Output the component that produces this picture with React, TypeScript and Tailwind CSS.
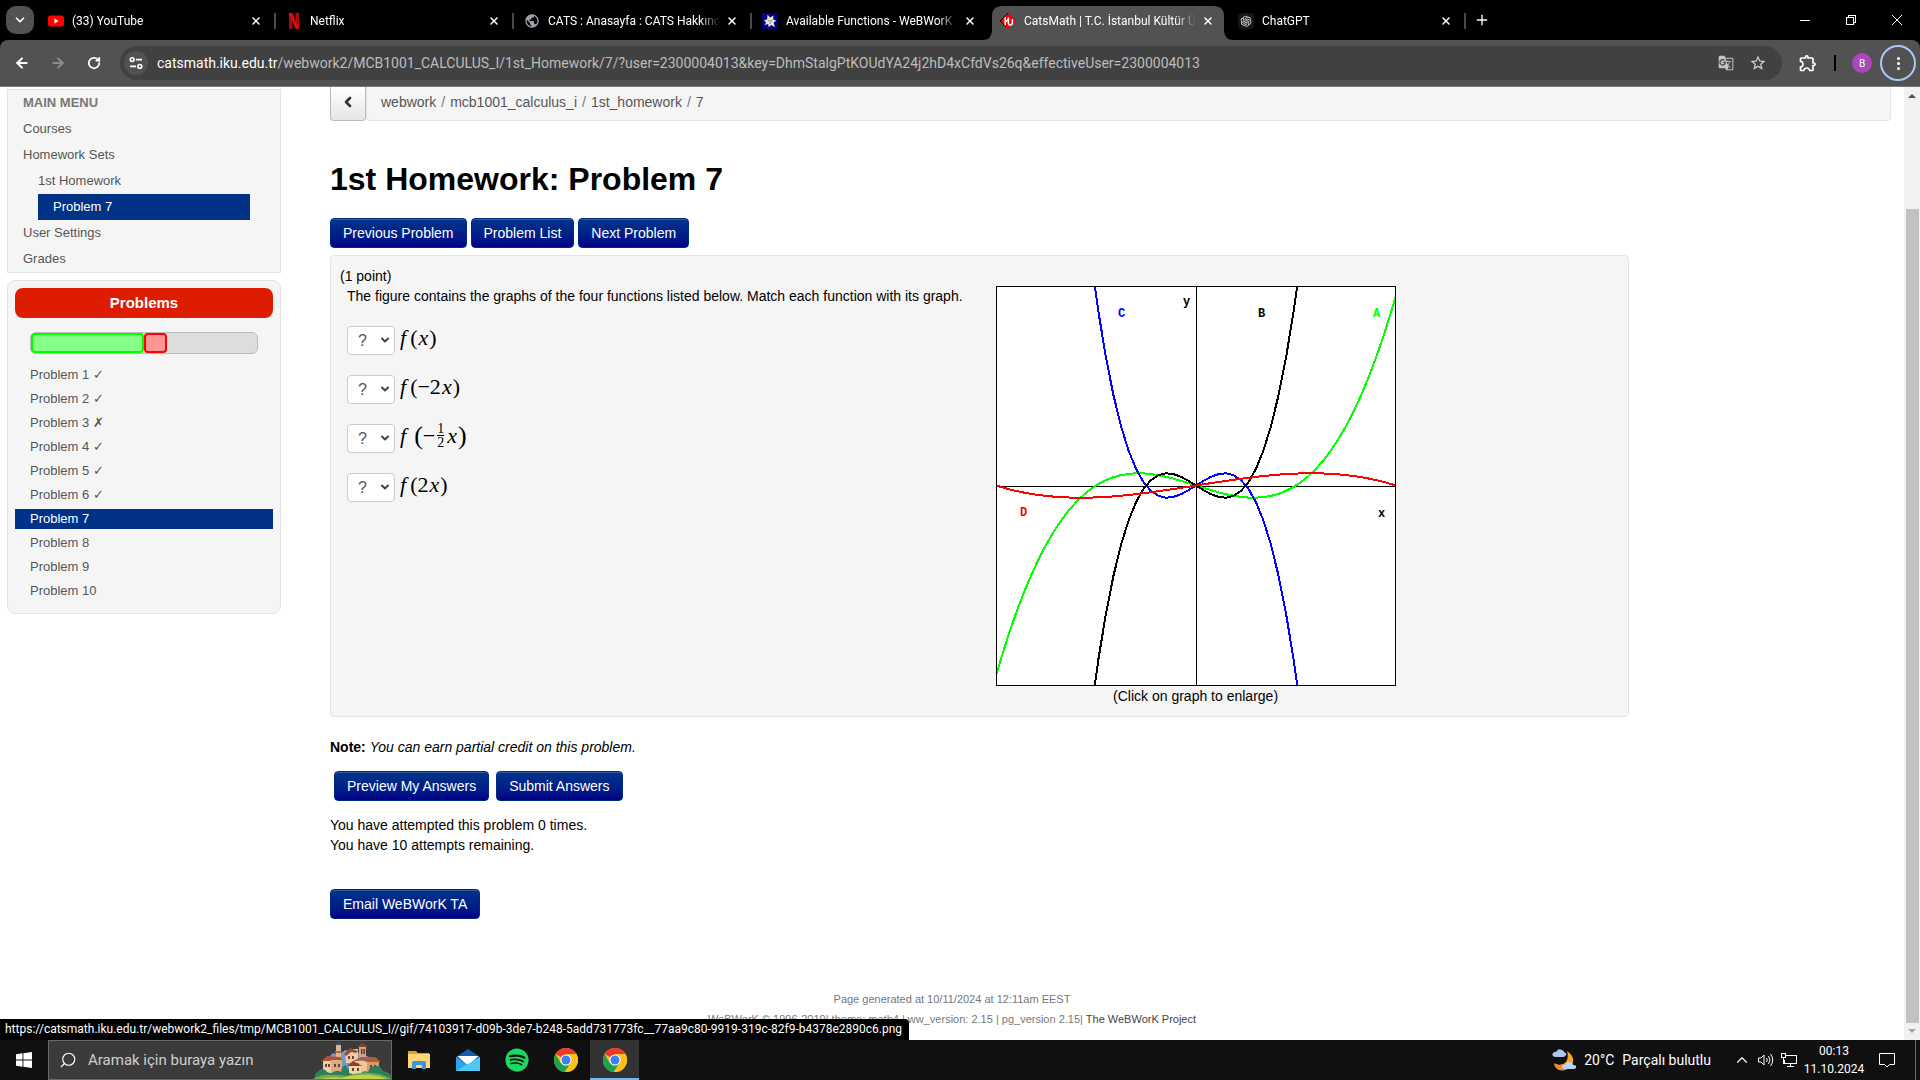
import React, { useState } from "react";
import { ArrowLeft, ArrowRight, ChevronDown, ChevronLeft, ChevronUp, Plus, RotateCw, Search, X } from "lucide-react";
import { FaSpotify } from "react-icons/fa";
import { AiOutlineOpenAI } from "react-icons/ai";
import { MdGTranslate, MdOutlineExtension, MdPublic, MdStarBorder } from "react-icons/md";

/* ---------- favicons ---------- */

function YoutubeIcon() {
  return (
    <svg viewBox="0 0 16 16" className="w-4 h-4 shrink-0">
      <rect x="0" y="2.5" width="16" height="11" rx="2.6" fill="#ff0000" />
      <path d="M6.4 5.6v4.8L10.6 8z" fill="#fff" />
    </svg>
  );
}

function NetflixIcon() {
  return (
    <svg viewBox="0 0 16 16" className="w-4 h-4 shrink-0">
      <path d="M3 0h3.3v16L3 16zM9.700 0H13v16l-3.300 0z" fill="#b1060f" />
      <path d="M3 0h3.3L13 16H9.700z" fill="#e50914" />
    </svg>
  );
}

function WebworkIcon() {
  return (
    <svg viewBox="0 0 16 16" className="w-4 h-4 shrink-0">
      <rect width="16" height="16" fill="#000080" />
      <path
        d="M5.5 1.500l2.600 2.900L11.500 2.500l-.4 3.700 3.100 1.500-2.600 1.800 1.400 4.700-3.600-2.100L6.500 14l-.3-2.900-3.800.8 1.800-2.500L2 7l3.200-.6z"
        fill="#ece6cf"
      />
      <path d="M6 7l2 1.500L10.400 7M7.400 10.400l1.800-.4" stroke="#6b6b86" strokeWidth="0.8" fill="none" />
    </svg>
  );
}

function CatsIcon() {
  return (
    <svg viewBox="0 0 16 16" className="w-4 h-4 shrink-0">
      <path d="M8 0l8 8-8 8-8-8z" fill="#f00000" />
      <path d="M8 0L0 8l6 6" stroke="#220000" strokeWidth="1" fill="none" />
      <path d="M5.200 4.200v8M5.400 9.200L9 5.600M8.400 4.600v5.600c0 2.400 4 2.400 4-.4V6" stroke="#fff" strokeWidth="1.5" fill="none" />
    </svg>
  );
}

function ChatIcon() {
  return (
    <span className="flex w-4 h-4 shrink-0 items-center justify-center rounded bg-[#171717]">
      <AiOutlineOpenAI className="w-3.5 h-3.5 text-zinc-300" />
    </span>
  );
}

function ChromeIcon() {
  return (
    <svg viewBox="0 0 24 24" className="w-6 h-6">
      <circle cx="12" cy="12" r="12" fill="#fbc116" />
      <path d="M12 12L1.6 6A12 12 0 0 1 22.4 6z" fill="#ea3c2d" />
      <path d="M22.4 6H12l-4 8z" fill="#ea3c2d" />
      <path d="M1.6 6l5.3 9.2 5.1 3L10.6 24A12 12 0 0 1 1.6 6z" fill="#1da251" />
      <path d="M10.6 24l6.2-9.5L12 12l-4.8 3.2 4.4 2.4z" fill="#1da251" />
      <path d="M22.4 6H12v6l5 2.8L11.4 24A12 12 0 0 0 22.4 6z" fill="#fbc116" />
      <circle cx="12" cy="12" r="5.6" fill="#fff" />
      <circle cx="12" cy="12" r="4.5" fill="#3b82f0" />
    </svg>
  );
}

/* ---------- browser chrome ---------- */

const TABS = [
  { title: "(33) YouTube", icon: <YoutubeIcon />, divider: true },
  { title: "Netflix", icon: <NetflixIcon />, divider: true },
  { title: "CATS : Anasayfa : CATS Hakkında", icon: <MdPublic className="w-4 h-4 shrink-0 text-[#9aa0a6]" />, divider: true },
  { title: "Available Functions - WeBWorK", icon: <WebworkIcon />, divider: false },
  { title: "CatsMath | T.C. İstanbul Kültür Üniversitesi", icon: <CatsIcon />, divider: false, active: true },
  { title: "ChatGPT", icon: <ChatIcon />, divider: true },
];

function TabStrip() {
  return (
    <div className="flex h-10 bg-black text-white">
      <div className="flex w-[38px] items-center pl-1.5">
        <button aria-label="Search tabs" className="flex h-7 w-7 items-center justify-center rounded-[10px] bg-[#525252]">
          <ChevronDown className="h-3.5 w-3.5" strokeWidth={3} />
        </button>
      </div>
      {TABS.map((tab) => (
        <div key={tab.title} className="relative flex w-[238px] min-w-0 pt-1.5">
          {tab.active && (
            <svg viewBox="0 0 252 34" className="absolute top-1.5 -left-2 h-[34px] w-[252px]">
              <path d="M0 34Q10 34 10 24V10Q10 0 20 0H232Q242 0 242 10V24Q242 34 252 34Z" fill="#525252" />
            </svg>
          )}
          <div className="relative flex flex-1 min-w-0 items-center pb-1 pl-2.5">
            {tab.icon}
            <span className="ml-2 flex-1 overflow-hidden text-xs leading-4 whitespace-nowrap [mask-image:linear-gradient(to_right,#000_88%,transparent)]">
              {tab.title}
            </span>
            <button aria-label={`Close ${tab.title}`} className="mr-2.5 ml-1 flex h-4 w-4 items-center justify-center">
              <X className="h-3 w-3" strokeWidth={3} />
            </button>
            <span className={`h-4 w-0.5 ${tab.divider ? "bg-[#4a4a4a]" : "bg-transparent"}`} />
          </div>
        </div>
      ))}
      <button aria-label="New tab" className="flex w-8 items-center justify-center">
        <Plus className="h-4 w-4" strokeWidth={2} />
      </button>
      <div className="ml-auto flex">
        <button aria-label="Minimize" className="flex w-[46px] items-center justify-center">
          <span className="h-px w-2.5 bg-white" />
        </button>
        <button aria-label="Restore" className="flex w-[46px] items-center justify-center">
          <svg viewBox="0 0 10 10" className="h-2.5 w-2.5" fill="none" stroke="#fff" shapeRendering="crispEdges">
            <path d="M.5 2.5h7v7h-7zM2.5 2.5v-2h7v7h-2" />
          </svg>
        </button>
        <button aria-label="Close" className="flex w-[46px] items-center justify-center">
          <svg viewBox="0 0 10 10" className="h-2.5 w-2.5" stroke="#fff">
            <path d="M0 0l10 10M10 0L0 10" />
          </svg>
        </button>
      </div>
    </div>
  );
}

function Toolbar() {
  return (
    <div className="bg-black">
      <div className="flex h-[47px] items-center rounded-t-lg border-b border-[#7a7a7a] bg-[#525252] px-1 text-white">
        <button aria-label="Back" className="flex h-8 w-9 items-center justify-center">
          <ArrowLeft className="h-4 w-4" strokeWidth={3} />
        </button>
        <button aria-label="Forward" className="flex h-8 w-9 items-center justify-center text-[#8c8c8c]">
          <ArrowRight className="h-4 w-4" strokeWidth={3} />
        </button>
        <button aria-label="Reload" className="flex h-8 w-9 items-center justify-center">
          <RotateCw className="h-3.5 w-3.5" strokeWidth={3} />
        </button>
        <div className="ml-2 flex h-[34px] flex-1 min-w-0 items-center rounded-full bg-[#414141] pr-2 pl-1">
          <span className="flex h-6 w-6 items-center justify-center rounded-full bg-[#525252]">
            <svg viewBox="0 0 14 14" className="h-3.5 w-3.5" fill="none" stroke="#fff" strokeWidth="1.6">
              <circle cx="3.2" cy="3.6" r="1.9" />
              <path d="M7 3.6h6M1 10.4h6" />
              <circle cx="10.8" cy="10.4" r="1.9" />
            </svg>
          </span>
          <span className="ml-[9px] flex-1 overflow-hidden text-sm leading-5 whitespace-nowrap text-[#bdbdbd]">
            <span className="text-white">catsmath.iku.edu.tr</span>
            /webwork2/MCB1001_CALCULUS_I/1st_Homework/7/?user=2300004013&amp;key=DhmStalgPtKOUdYA24j2hD4xCfdVs26q&amp;effectiveUser=2300004013
          </span>
          <button aria-label="Translate" className="flex w-8 justify-center">
            <MdGTranslate className="h-4 w-4 text-[#c4c4c4]" />
          </button>
          <button aria-label="Bookmark" className="flex w-8 justify-center">
            <MdStarBorder className="h-[18px] w-[18px] text-[#d4d4d4]" />
          </button>
        </div>
        <button aria-label="Extensions" className="ml-3 flex w-7 justify-center">
          <MdOutlineExtension className="h-5 w-5" />
        </button>
        <span className="ml-3 h-4 w-0.5 bg-black" />
        <button aria-label="Profile" className="ml-4 flex h-5 w-5 items-center justify-center rounded-full bg-[#ab47bc] text-[10px]">
          B
        </button>
        <button aria-label="Menu" className="ml-2 flex h-9 w-9 flex-col items-center justify-center gap-0.5 rounded-full border-2 border-[#a8c7fa]">
          <span className="h-[3px] w-[3px] rounded-full bg-white" />
          <span className="h-[3px] w-[3px] rounded-full bg-white" />
          <span className="h-[3px] w-[3px] rounded-full bg-white" />
        </button>
      </div>
    </div>
  );
}

/* ---------- course page ---------- */

const PROBLEMS = [
  { id: 1, mark: "✓" },
  { id: 2, mark: "✓" },
  { id: 3, mark: "✗" },
  { id: 4, mark: "✓" },
  { id: 5, mark: "✓" },
  { id: 6, mark: "✓" },
  { id: 7, mark: "" },
  { id: 8, mark: "" },
  { id: 9, mark: "" },
  { id: 10, mark: "" },
];

function Sidebar() {
  return (
    <aside className="w-[274px] shrink-0 pt-0.5 text-[13px] text-[#555]">
      <nav className="border border-[#e3e3e3] bg-[#f5f5f5] px-[15px] leading-[26px]">
        <h2 className="font-bold text-[#777]">MAIN MENU</h2>
        <a href="#courses" className="block">Courses</a>
        <a href="#sets" className="block">Homework Sets</a>
        <a href="#set1" className="block pl-[15px]">1st Homework</a>
        <a href="#problem7" className="mx-[15px] block bg-[#003388] pl-[15px] text-white">Problem 7</a>
        <a href="#settings" className="block">User Settings</a>
        <a href="#grades" className="block">Grades</a>
      </nav>

      <div className="mt-[7px] rounded-lg border border-[#e3e3e3] bg-[#f5f5f5] px-[7px] pt-[7px] pb-3">
        <h2 className="rounded-lg bg-[#de1c00] text-center font-bold text-[15px] leading-[30px] text-white">Problems</h2>
        <div className="mx-[15px] mt-3.5 flex h-[22px] rounded-md border border-[#bbb] bg-[#ddd]">
          <span className="w-1/2 rounded-sm border-2 border-[#00ff00] bg-[#88ff88]" />
          <span className="w-1/10 rounded-sm border-2 border-[#ff0000] bg-[#ff9494]" />
        </div>
        <div className="mt-[11px] space-y-1 leading-5">
          {PROBLEMS.map((p) => (
            <a
              key={p.id}
              href={`#problem${p.id}`}
              className={`block h-5 pl-[15px] ${p.id === 7 ? "bg-[#003388] text-white" : ""}`}
            >
              Problem {p.id} {p.mark}
            </a>
          ))}
        </div>
      </div>
    </aside>
  );
}

const BUTTON =
  "rounded-sm border border-[#002a80] bg-linear-to-b from-[#003388] to-[#000088] px-3 text-sm leading-7 text-white shadow-[inset_0_1px_0_rgba(255,255,255,0.2)]";

const FUNCTIONS = [
  { id: "fx", formula: <><i>f</i><span className="ml-1">(</span><i className="mx-px">x</i>)</> },
  { id: "fm2x", formula: <><i>f</i><span className="ml-1">(</span>−2<i className="mx-px">x</i>)</> },
  {
    id: "fhalf",
    formula: (
      <>
        <i>f</i>
        <span className="ml-2 text-[26px]">(</span>−
        <span className="mx-0.5 inline-flex flex-col text-center text-sm leading-3">
          <span className="border-b border-black">1</span>
          <span className="pt-px">2</span>
        </span>
        <i className="mx-px">x</i>
        <span className="text-[26px]">)</span>
      </>
    ),
  },
  { id: "f2x", formula: <><i>f</i><span className="ml-1">(</span>2<i className="mx-px">x</i>)</> },
];

function cubic(x: number) {
  return 0.0000317 * x * (x * x - 10000);
}

// samples fn every 7.5px across the 400px plot
function curve(fn: (x: number) => number) {
  const points: string[] = [];
  for (let x = -202.5; x <= 202.5; x += 7.5) {
    points.push(`${x + 200},${(199.5 - fn(x)).toFixed(1)}`);
  }
  return points.join(" ");
}

const CURVES = [
  { color: "#00ff00", points: curve(cubic) },
  { color: "#0000ff", points: curve((x) => -cubic(2 * x)) },
  { color: "#000000", points: curve((x) => cubic(2 * x)) },
  { color: "#ff0000", points: curve((x) => -cubic(x / 2)) },
];

const LABELS = [
  { text: "y", x: 187, y: 19, color: "#000000" },
  { text: "x", x: 382, y: 231, color: "#000000" },
  { text: "A", x: 377, y: 31, color: "#00ff00" },
  { text: "B", x: 262, y: 31, color: "#000000" },
  { text: "C", x: 122, y: 31, color: "#0000ff" },
  { text: "D", x: 24, y: 230, color: "#ff0000" },
];

function Graph() {
  return (
    <svg viewBox="0 0 400 400" className="block h-[400px] w-[400px] bg-white">
      <g fill="none" shapeRendering="crispEdges">
        <path d="M200.5 0V400M0 200.5H400" stroke="#000" />
        {CURVES.map((c) => (
          <polyline key={c.color} points={c.points} stroke={c.color} strokeWidth="2" />
        ))}
        <rect x="0.5" y="0.5" width="399" height="399" stroke="#000" />
      </g>
      {LABELS.map((l) => (
        <text key={l.text} x={l.x} y={l.y} fill={l.color} className="font-['Liberation_Mono',monospace] text-xs font-bold">
          {l.text}
        </text>
      ))}
    </svg>
  );
}

function Problem() {
  const [answers, setAnswers] = useState<Record<string, string>>({});

  return (
    <main className="ml-[49px] flex-1 min-w-0 pr-[13px] text-sm leading-5 text-black">
      <div className="flex h-[34px]">
        <button aria-label="Hide menu" className="flex w-9 items-center justify-center rounded-b border border-t-0 border-[#bbb] bg-linear-to-b from-white to-[#e6e6e6] pb-1">
          <ChevronLeft className="h-4 w-4 text-[#333]" strokeWidth={4} />
        </button>
        <nav className="flex flex-1 gap-[5px] rounded-b border border-t-0 border-[#e3e3e3] bg-[#f5f5f5] pt-[5px] pl-3.5 text-[#555]">
          <a href="#webwork">webwork</a>
          <span className="text-[#777]">/</span>
          <a href="#course">mcb1001_calculus_i</a>
          <span className="text-[#777]">/</span>
          <a href="#set1">1st_homework</a>
          <span className="text-[#777]">/</span>
          <span>7</span>
        </nav>
      </div>

      <h1 className="mt-[38px] text-[32px] leading-10 font-bold">1st Homework: Problem 7</h1>

      <div className="mt-[19px] flex gap-1">
        <button className={BUTTON}>Previous Problem</button>
        <button className={BUTTON}>Problem List</button>
        <button className={BUTTON}>Next Problem</button>
      </div>

      <div className="mt-[7px] w-[83.2%] rounded-sm border border-[#e3e3e3] bg-[#f5f5f5] px-[9px] pt-2.5 pb-2.5">
        <p>(1 point)</p>
        <div className="flex gap-[33px] pl-[7px]">
          <div>
            <p>The figure contains the graphs of the four functions listed below. Match each function with its graph.</p>
            <div className="mt-5 space-y-5">
              {FUNCTIONS.map((fn) => (
                <div key={fn.id} className="flex h-[29px] items-center gap-[5px]">
                  <div className="relative">
                    <select
                      id={fn.id}
                      value={answers[fn.id] ?? "?"}
                      onChange={(e) => setAnswers({ ...answers, [fn.id]: e.target.value })}
                      className="block h-[29px] w-12 appearance-none rounded border border-[#ccc] bg-white pl-2.5 text-base leading-5 text-[#555]"
                    >
                      <option>?</option>
                      <option>A</option>
                      <option>B</option>
                      <option>C</option>
                      <option>D</option>
                    </select>
                    <ChevronDown className="pointer-events-none absolute top-2 right-1 h-3 w-3 text-[#444]" strokeWidth={4} />
                  </div>
                  <label htmlFor={fn.id} className="flex items-center pb-1.5 font-['Liberation_Serif',serif] text-[22px]">
                    {fn.formula}
                  </label>
                </div>
              ))}
            </div>
          </div>
          <a href="#graph" className="block text-center">
            <Graph />
            (Click on graph to enlarge)
          </a>
        </div>
      </div>

      <p className="mt-5">
        <b>Note:</b> <em>You can earn partial credit on this problem.</em>
      </p>

      <div className="mt-3.5 ml-1 flex gap-[7px]">
        <button className={BUTTON}>Preview My Answers</button>
        <button className={BUTTON}>Submit Answers</button>
      </div>

      <p className="mt-3.5">
        You have attempted this problem 0 times.
        <br />
        You have 10 attempts remaining.
      </p>

      <button className={`mt-[34px] block ${BUTTON}`}>Email WeBWorK TA</button>
    </main>
  );
}

function Scrollbar() {
  return (
    <div className="flex w-4 flex-col items-center bg-[#f1f1f1]">
      <svg viewBox="0 0 16 17" className="h-[17px] w-4">
        <path d="M4 11l4-4 4 4z" fill="#505050" />
      </svg>
      <span className="mt-[105px] w-[13px] flex-1 bg-[#c1c1c1]" />
      <svg viewBox="0 0 16 17" className="h-[17px] w-4">
        <path d="M4 6l4 4 4-4z" fill="#a3a3a3" />
      </svg>
    </div>
  );
}

/* ---------- taskbar ---------- */

function VillageArt() {
  return (
    <svg viewBox="0 0 78 38" className="h-[38px] w-[78px]">
      <path d="M12 20l8-8 6 2 6-5 12 2 10 4 8 4-4 10H14z" fill="#6f9ccb" />
      <path d="M23 4h5v14h-5z" fill="#e3b48c" />
      <path d="M23 4q0-3 2.500-4 2.500 1 2.500 4z" fill="#3f4a6b" />
      <path d="M22 10h7v2h-7z" fill="#a86a4c" />
      <path d="M32 12l5-4h8v14H33z" fill="#efc9a0" />
      <path d="M31 13l6-6 8 3-2 2-5-1-5 4z" fill="#9b4a34" />
      <path d="M46 5h7v13h-7z" fill="#dba37b" />
      <path d="M44 6l5-4 6 4z" fill="#8d4030" />
      <path d="M48 8h1.500v5H48zM50.500 8H52v5h-1.500z" fill="#5a3a34" />
      <path d="M10 19h19v13H10z" fill="#f2cba2" />
      <path d="M8 20l6-5 13 1 3 3-12 1z" fill="#a9543a" />
      <path d="M18 19h11v13H18z" fill="#ddaa80" />
      <path d="M40 20h26v12H40z" fill="#f0c594" />
      <path d="M38 21l10-5 14 0 6 5-14 0-5-2z" fill="#b05c3e" />
      <path d="M54 21h12v11H54z" fill="#d79a6c" />
      <path d="M36 24h12v10H36z" fill="#f5d4ac" />
      <path d="M34 25l6-5 9 5z" fill="#8d4030" />
      <path d="M12 23h2v3h-2zM15 23h2v3h-2zM21 23h2v3h-2zM25 23h2v3h-2zM35 15h2v3h-2zM39 15h2v3h-2zM39 27h2v3h-2zM44 27h2v3h-2zM57 24h2v3h-2zM61 24h2v3h-2zM44 22h1.500v3H44z" fill="#6b4238" />
      <path d="M2 36q-1-4 3-5 2-5 7-2 3 4 7 3 5-4 9-1 1-6 4-7 4 3 4 8 6 2 11 1 3-4 8-2 2-7 8-6 5 0 7 5 6 1 8 5v3H2z" fill="#2f7f5c" />
      <path d="M0 38q8-5 20-4 8 0 14 1 12-5 24-3 12 1 20 6z" fill="#6fb04a" />
      <path d="M8 38q10-3 20-1 14-4 30-3 10 1 16 4z" fill="#c3cf45" />
    </svg>
  );
}

function Taskbar() {
  return (
    <div className="flex h-10 shrink-0 bg-[#101010] text-white">
      <button aria-label="Start" className="flex w-12 items-center justify-center">
        <svg viewBox="0 0 16 16" className="h-4 w-4" fill="#fff">
          <path d="M0 2.200L6.500 1.300V7.600H0zM7.400 1.200L16 0V7.600H7.400zM0 8.400H6.500V14.700L0 13.800zM7.400 8.400H16V16L7.400 14.800z" />
        </svg>
      </button>
      <label className="flex w-[344px] items-center border border-[#6a6a6a] bg-[#3b3b3b] pl-2.5">
        <Search className="h-[18px] w-[18px] -scale-x-100" strokeWidth={1.5} />
        <input
          aria-label="Search"
          placeholder="Aramak için buraya yazın"
          className="ml-[11px] min-w-0 flex-1 bg-transparent text-[15px] leading-5 placeholder:text-[#cfcfcf]"
        />
        <VillageArt />
      </label>
      <div className="ml-0.5 flex items-center">
        <button aria-label="File Explorer" className="flex w-[49px] justify-center">
          <svg viewBox="0 0 22 20" className="h-5 w-[22px]">
            <path d="M0 1h8l2 2h11v6H0z" fill="#e0a020" />
            <path d="M0 4h22v14H0z" fill="#ffd772" />
            <path d="M4 13q0-2 2-2h10q2 0 2 2v6h-4v-4H8v4H4z" fill="#3f93dd" />
          </svg>
        </button>
        <button aria-label="Mail" className="flex w-[49px] justify-center">
          <svg viewBox="0 0 24 22" className="h-[22px] w-6">
            <path d="M0 8l12-8 12 8v4H0z" fill="#0f5fae" />
            <path d="M1.500 7h21L12 17z" fill="#fff" />
            <path d="M0 8l12 8 12-8v14H0z" fill="#2ea3e8" />
            <path d="M0 22L24 8v14z" fill="#50c8f5" />
          </svg>
        </button>
        <button aria-label="Spotify" className="flex w-[49px] justify-center">
          <FaSpotify className="h-6 w-6 text-[#1ed760]" />
        </button>
        <button aria-label="Chrome" className="flex w-[49px] justify-center">
          <ChromeIcon />
        </button>
        <button aria-label="Chrome window" className="flex h-10 w-[49px] items-center justify-center border-b-2 border-[#76b9ed] bg-[#333] pt-0.5">
          <ChromeIcon />
        </button>
      </div>

      <div className="ml-auto flex items-center">
        <svg viewBox="0 0 24 22" className="h-[22px] w-6">
          <path d="M15 2q9 6 5 14-5 7-13 5-4-2-5-6 7 3 12-2 3-5 1-11z" fill="#f5a623" />
          <path d="M2 14q3 8 12 7l-3-6q-4 2-9-1z" fill="#ee8a2a" />
          <path d="M3 8q-4-1-2-4 2-2 3-1 2-4 6-2 2 1 2 2 3 1 2 3-1 2-3 2z" fill="#a9c8f2" />
          <path d="M12 20q-3-1-2-3 1-2 3-1 2-4 5-3 3 1 3 3 4 0 3 3-1 1-3 1z" fill="#bcd4f7" />
        </svg>
        <span className="ml-2 text-sm leading-5">20°C</span>
        <span className="ml-2 text-sm leading-5">Parçalı bulutlu</span>
        <ChevronUp className="ml-[22px] h-[18px] w-[18px]" strokeWidth={1.5} />
        <svg viewBox="0 0 16 16" className="ml-1.5 h-4 w-[18px]" fill="none" stroke="#fff">
          <path d="M.5 6v4h2.500l3 3V3l-3 3zM8.500 6q1.500 2 0 4M10.500 4q3 4 0 8M12.500 2q4.500 6 0 12" />
        </svg>
        <svg viewBox="0 0 16 16" className="ml-1.5 h-4 w-4" fill="none" stroke="#fff" shapeRendering="crispEdges">
          <path d="M5 3.500h10.500v8H3.500v-4M9.500 11.500v3M6 14.500h7M.5 1.500h4v4h-4zM2.500 5.500v6" />
        </svg>
        <span className="w-[74px] text-center text-xs leading-[18px]">
          00:13
          <br />
          11.10.2024
        </span>
        <button aria-label="Notifications" className="flex w-8 justify-center">
          <svg viewBox="0 0 16 16" className="h-4 w-4" fill="none" stroke="#fff">
            <path d="M.5 1.500h15v11h-5l-2.500 2.500-2.500-2.500h-5z" />
          </svg>
        </button>
        <span className="mr-1 ml-3 h-10 w-px bg-[#6a6a6a]" />
      </div>
    </div>
  );
}

export default function App() {
  return (
    <div className="flex h-screen flex-col overflow-hidden bg-white font-[Roboto,sans-serif]">
      <TabStrip />
      <Toolbar />
      <div className="relative flex flex-1 min-h-0">
        <div className="flex-1 min-w-0 overflow-hidden font-['Liberation_Sans',Arial,sans-serif]">
          <div className="flex pl-[7px]">
            <Sidebar />
            <Problem />
          </div>
          <footer className="mt-[70px] text-center text-[11px] leading-5 text-[#777]">
            <p>Page generated at 10/11/2024 at 12:11am EEST</p>
            <p>
              WeBWorK © 1996-2019| theme: math4 | ww_version: 2.15 | pg_version 2.15|{" "}
              <a href="#project" className="text-[#444]">The WeBWorK Project</a>
            </p>
          </footer>
        </div>
        <Scrollbar />
        <div className="absolute bottom-0 left-0 rounded-tr bg-black pr-[7px] pl-[5px] text-xs leading-[21px] text-white">
          https://catsmath.iku.edu.tr/webwork2_files/tmp/MCB1001_CALCULUS_I//gif/74103917-d09b-3de7-b248-5add731773fc__77aa9c80-9919-319c-82f9-b4378e2890c6.png
        </div>
      </div>
      <Taskbar />
    </div>
  );
}
